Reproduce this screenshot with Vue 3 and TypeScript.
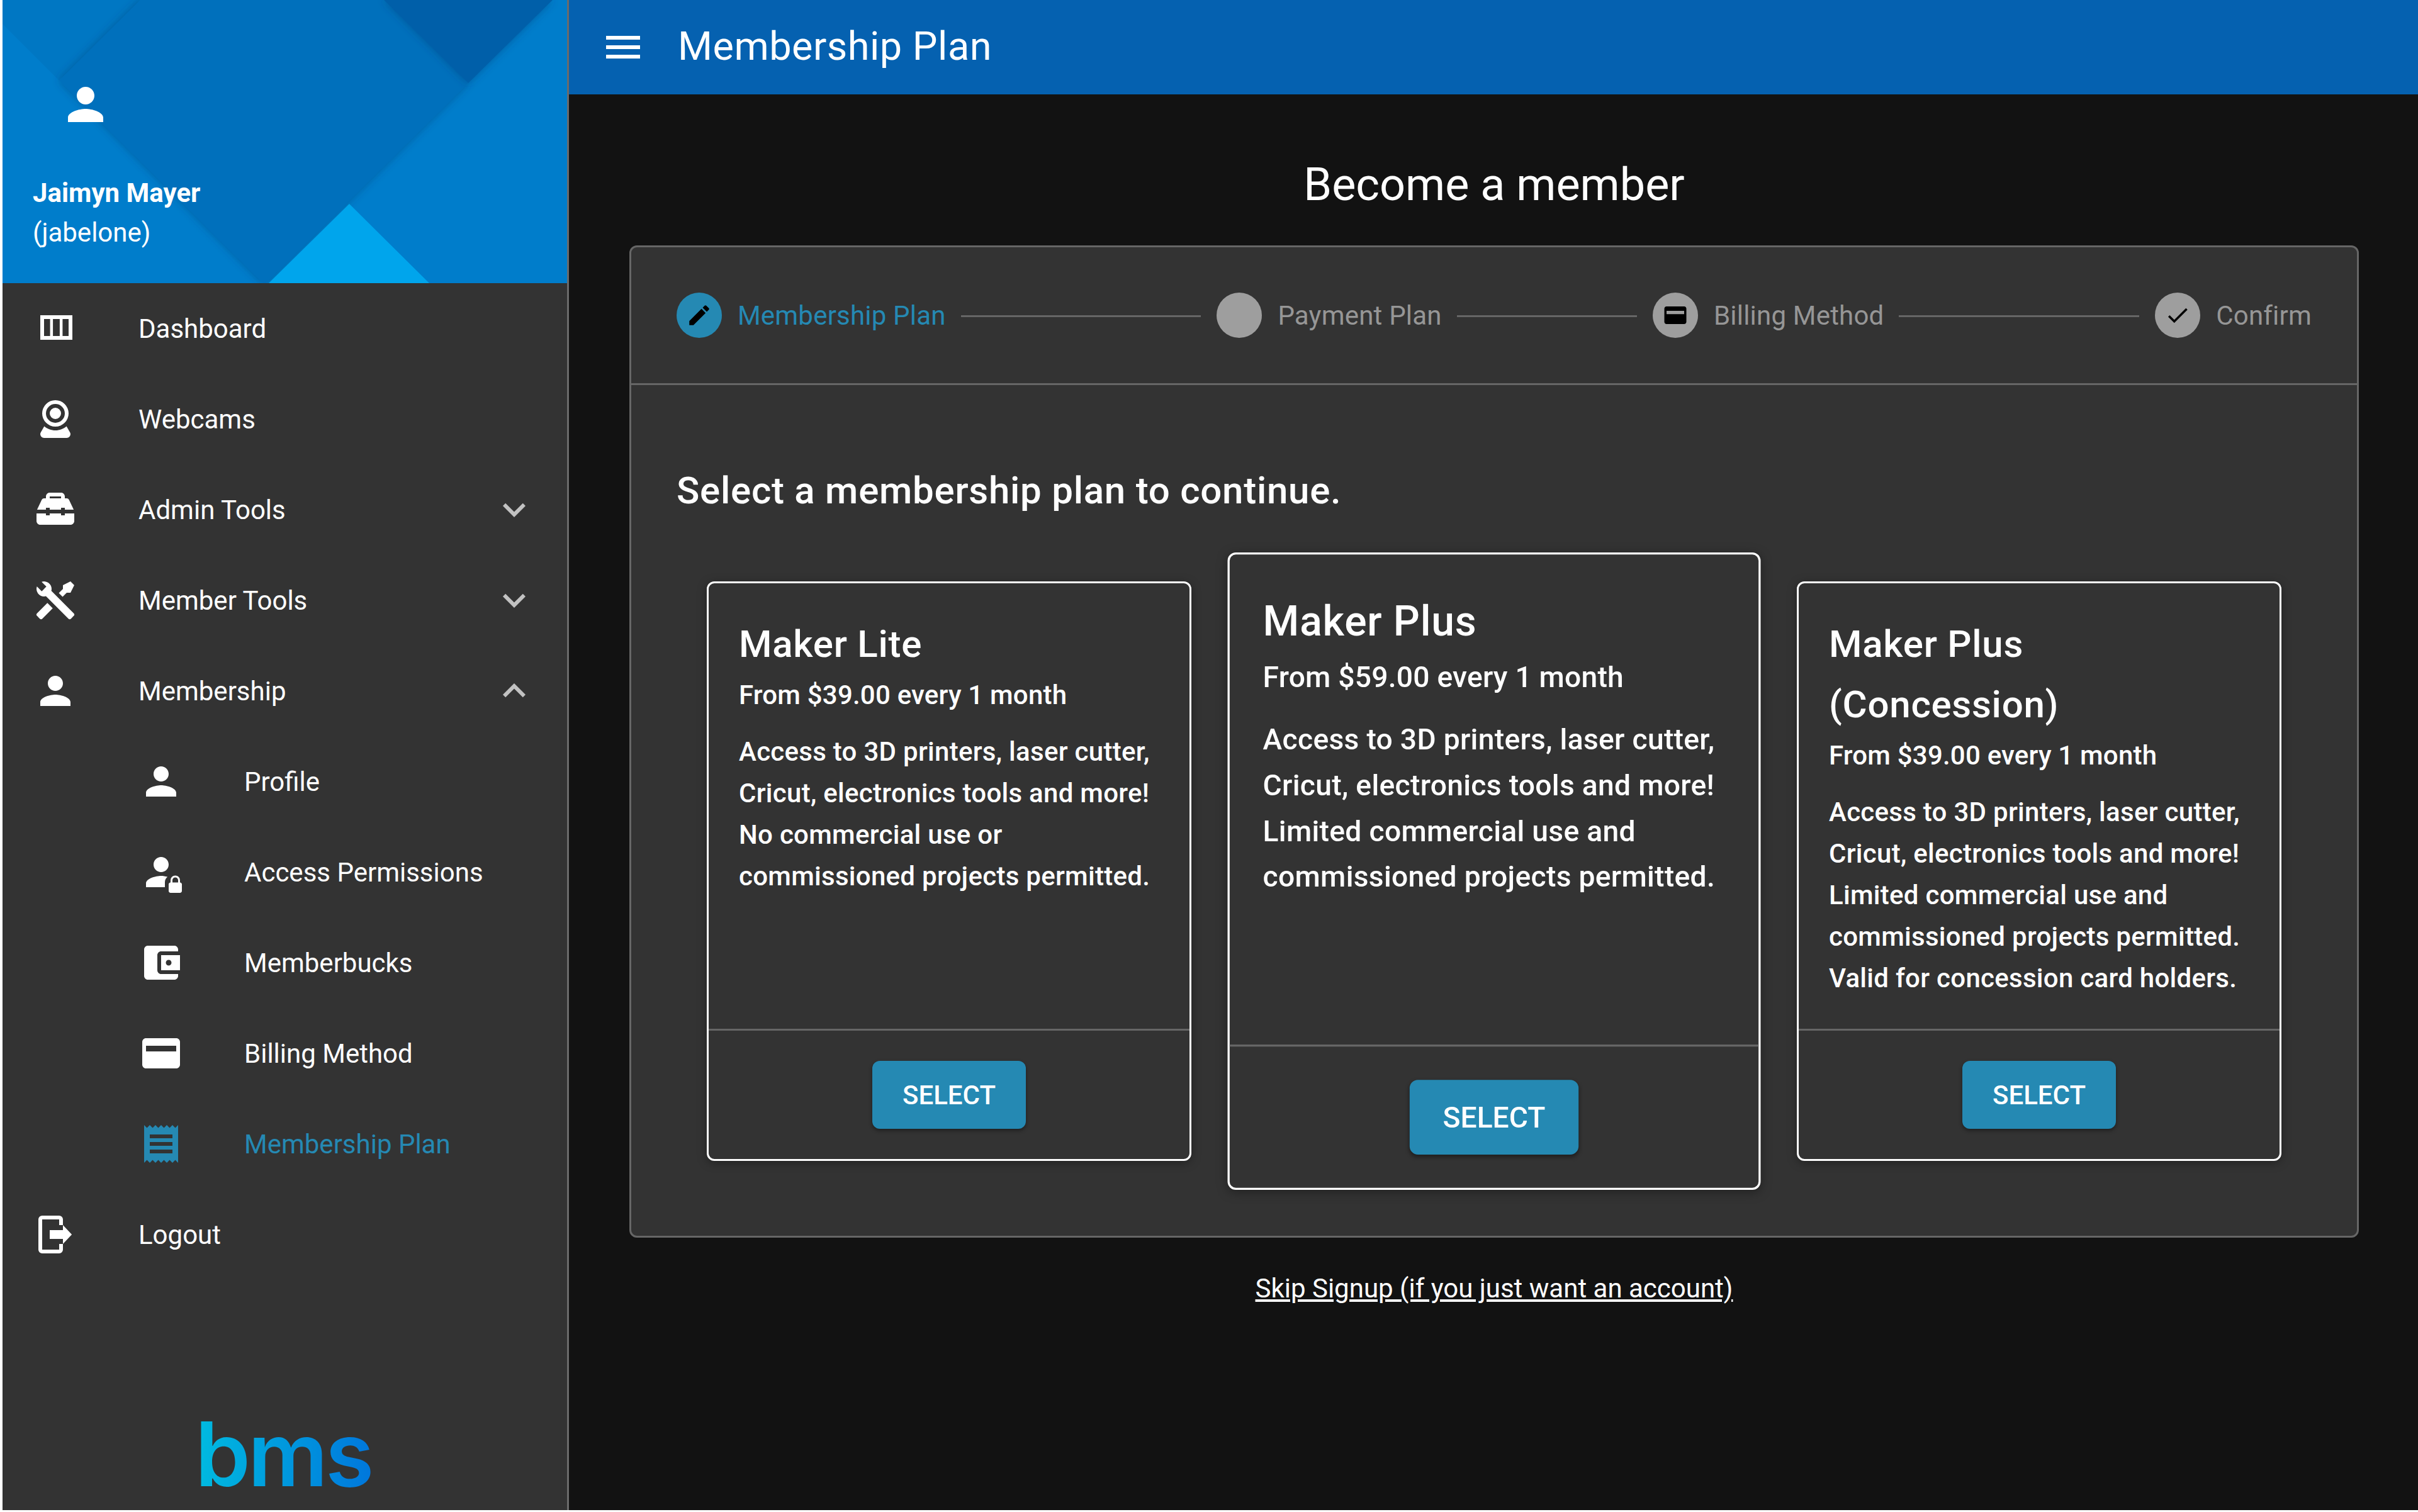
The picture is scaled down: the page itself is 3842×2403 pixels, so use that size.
<template>
  <div class="app-shell">
    <aside class="drawer">
      <div class="drawer-header">
        <svg class="header-art" viewBox="0 0 897 450" preserveAspectRatio="none">
          <defs>
            <filter id="soft" x="-10%" y="-10%" width="120%" height="120%">
              <feDropShadow dx="0" dy="0" stdDeviation="7" flood-color="#00386e" flood-opacity="0.45" />
            </filter>
          </defs>
          <rect width="897" height="450" fill="#007dcb" />
          <polygon points="0,38 90,128 219,0 0,0" fill="#0077c3" />
          <polygon points="219,0 90,128 416,452 740,132 606,0" fill="#0070bc" filter="url(#soft)" />
          <polygon points="606,0 874,0 740,132" fill="#005fa9" filter="url(#soft)" />
          <polygon points="551,324 423,450 678,450" fill="#00a5ec" />
        </svg>
        <svg class="header-avatar" viewBox="0 0 24 24"><path :d="icons.person" /></svg>
        <div class="user-name">Jaimyn Mayer</div>
        <div class="user-handle">(jabelone)</div>
      </div>

      <nav class="nav-list">
        <div
          v-for="item in navItems"
          :key="item.label"
          class="nav-item"
          :class="{ sub: item.sub, active: item.active }"
        >
          <svg class="nav-icon" viewBox="0 0 24 24"><path :d="item.icon" fill-rule="evenodd" /></svg>
          <span class="nav-label">{{ item.label }}</span>
          <svg v-if="item.chevron" class="nav-chevron" viewBox="0 0 24 24">
            <path :d="item.chevron === 'up' ? icons.chevronUp : icons.chevronDown" />
          </svg>
        </div>
      </nav>

      <div class="drawer-logo">
        <span class="logo-text">bms</span>
      </div>
    </aside>

    <div class="page">
      <header class="toolbar">
        <svg class="menu-icon" viewBox="0 0 24 24"><path d="M3 18h18v-2H3v2zm0-5h18v-2H3v2zm0-7v2h18V6H3z" /></svg>
        <div class="toolbar-title">Membership Plan</div>
      </header>

      <main class="content">
        <h1 class="page-title">Become a member</h1>

        <section class="stepper">
          <div class="stepper-head">
            <template v-for="(step, i) in steps" :key="step.label">
              <div class="step" :class="{ current: i === 0 }">
                <span class="step-dot">
                  <svg v-if="step.icon" viewBox="0 0 24 24"><path :d="step.icon" fill-rule="evenodd" /></svg>
                </span>
                <span class="step-label">{{ step.label }}</span>
              </div>
              <div v-if="step.grow" class="step-line" :class="`grow-${step.grow}`"></div>
            </template>
          </div>

          <div class="stepper-body">
            <h2 class="select-title">Select a membership plan to continue.</h2>
            <div class="plans">
              <article v-for="plan in plans" :key="plan.name + plan.price" class="plan" :class="{ featured: plan.featured }">
                <div class="plan-main">
                  <h3 class="plan-name">{{ plan.name }}</h3>
                  <div class="plan-price">{{ plan.price }}</div>
                  <p class="plan-desc">
                    <span v-for="line in plan.lines" :key="line">{{ line }}</span>
                  </p>
                </div>
                <div class="plan-actions">
                  <button class="select-btn" type="button">SELECT</button>
                </div>
              </article>
            </div>
          </div>
        </section>

        <a class="skip-link" href="#">Skip Signup (if you just want an account)</a>
      </main>
    </div>
  </div>
</template>

<script setup lang="ts">
interface NavItem {
  label: string
  icon: string
  sub?: boolean
  active?: boolean
  chevron?: 'up' | 'down'
}

interface Plan {
  name: string
  price: string
  lines: string[]
  featured?: boolean
}

const icons = {
  person: 'M12 12c2.21 0 4-1.79 4-4s-1.79-4-4-4-4 1.79-4 4 1.79 4 4 4zm0 2c-2.67 0-8 1.34-8 4v2h16v-2c0-2.66-5.33-4-8-4z',
  dashboard: 'M4 5h17v13H4zM6 7v9h3.2V7zM10.7 7v9h3.6V7zM15.8 7v9H19V7z',
  webcam: 'M12,2A7,7 0 0,1 19,9A7,7 0 0,1 12,16A7,7 0 0,1 5,9A7,7 0 0,1 12,2M12,4A5,5 0 0,0 7,9A5,5 0 0,0 12,14A5,5 0 0,0 17,9A5,5 0 0,0 12,4M12,6A3,3 0 0,1 15,9A3,3 0 0,1 12,12A3,3 0 0,1 9,9A3,3 0 0,1 12,6M6,22A2,2 0 0,1 4,20C4,19.62 4.1,19.27 4.29,18.97L6.11,15.81C7.69,17.17 9.75,18 12,18C14.25,18 16.31,17.17 17.89,15.81L19.71,18.97C19.9,19.27 20,19.62 20,20A2,2 0 0,1 18,22H6Z',
  toolbox: 'M9 3h6c1.1 0 2 .9 2 2v1h1c.6 0 1.1.4 1.3.9L21.7 12H17v-1h-2v1H9v-1H7v1H2.3l2.4-5.1C4.9 6.4 5.4 6 6 6h1V5c0-1.1.9-2 2-2zM9 5v1h6V5zM2 14h5v1h2v-1h6v1h2v-1h5v4c0 1.1-.9 2-2 2H4c-1.1 0-2-.9-2-2z',
  tools: 'M21.71 20.29L20.29 21.71A1 1 0 0 1 18.88 21.71L7 9.85A3.81 3.81 0 0 1 6 10A4 4 0 0 1 2.22 4.7L4.76 7.24L5.29 6.71L6.71 5.29L7.24 4.76L4.7 2.22A4 4 0 0 1 10 6A3.81 3.81 0 0 1 9.85 7L21.71 18.88A1 1 0 0 1 21.71 20.29M2.29 18.88A1 1 0 0 0 2.29 20.29L3.71 21.71A1 1 0 0 0 5.12 21.71L10.59 16.25L7.76 13.42M20 2L16 4V6L13.83 8.17L15.83 10.17L18 8H20L22 4Z',
  personLock: 'M12 12c2.21 0 4-1.79 4-4s-1.79-4-4-4-4 1.79-4 4 1.79 4 4 4zM4 20v-2c0-2.66 5.33-4 8-4 1 0 2.2.18 3.4.52-.9.68-1.4 1.7-1.4 2.9V20zM22 17.5v-1.2a2.5 2.5 0 0 0-5 0v1.2c-.55 0-1 .45-1 1V22c0 .55.45 1 1 1h5c.55 0 1-.45 1-1v-3.5c0-.55-.45-1-1-1zm-1 0h-3v-1.2a1.5 1.5 0 0 1 3 0z',
  wallet: 'M21 18v1c0 1.1-.9 2-2 2H5c-1.11 0-2-.9-2-2V5c0-1.1.89-2 2-2h14c1.1 0 2 .9 2 2v1h-9c-1.11 0-2 .9-2 2v8c0 1.1.89 2 2 2h9zm-9-2h10V8H12v8zm4-2.5c-.83 0-1.5-.67-1.5-1.5s.67-1.5 1.5-1.5 1.5.67 1.5 1.5-.67 1.5-1.5 1.5z',
  card: 'M20 4H4c-1.11 0-1.99.89-1.99 2L2 18c0 1.11.89 2 2 2h16c1.11 0 2-.89 2-2V6c0-1.11-.89-2-2-2zm0 7H4V8h16v3z',
  receipt: 'M18 17H6v-2h12v2zm0-4H6v-2h12v2zm0-4H6V7h12v2zM3 22l1.5-1.5L6 22l1.5-1.5L9 22l1.5-1.5L12 22l1.5-1.5L15 22l1.5-1.5L18 22l1.5-1.5L21 22V2l-1.5 1.5L18 2l-1.5 1.5L15 2l-1.5 1.5L12 2l-1.5 1.5L9 2 7.5 3.5 6 2 4.5 3.5 3 2v20z',
  logout: 'M5 2h9a2 2 0 0 1 2 2v3h-2V4H5v16h9v-3h2v3a2 2 0 0 1-2 2H5a2 2 0 0 1-2-2V4a2 2 0 0 1 2-2zM9 9.7h7V7l4.7 5-4.7 5v-2.7H9z',
  chevronDown: 'M16.59 8.59L12 13.17 7.41 8.59 6 10l6 6 6-6z',
  chevronUp: 'M12 8l-6 6 1.41 1.41L12 10.83l4.59 4.58L18 14z',
  edit: 'M3 17.25V21h3.75L17.81 9.94l-3.75-3.75L3 17.25zM20.71 7.04c.39-.39.39-1.02 0-1.41l-2.34-2.34c-.39-.39-1.02-.39-1.41 0l-1.83 1.83 3.75 3.75 1.83-1.83z',
  check: 'M9 16.17L4.83 12l-1.42 1.41L9 19 21 7l-1.41-1.41z'
}

const navItems: NavItem[] = [
  { label: 'Dashboard', icon: icons.dashboard },
  { label: 'Webcams', icon: icons.webcam },
  { label: 'Admin Tools', icon: icons.toolbox, chevron: 'down' },
  { label: 'Member Tools', icon: icons.tools, chevron: 'down' },
  { label: 'Membership', icon: icons.person, chevron: 'up' },
  { label: 'Profile', icon: icons.person, sub: true },
  { label: 'Access Permissions', icon: icons.personLock, sub: true },
  { label: 'Memberbucks', icon: icons.wallet, sub: true },
  { label: 'Billing Method', icon: icons.card, sub: true },
  { label: 'Membership Plan', icon: icons.receipt, sub: true, active: true },
  { label: 'Logout', icon: icons.logout }
]

const steps = [
  { label: 'Membership Plan', icon: icons.edit, grow: 4 },
  { label: 'Payment Plan', icon: '', grow: 3 },
  { label: 'Billing Method', icon: icons.card, grow: 4 },
  { label: 'Confirm', icon: icons.check, grow: 0 }
]

const plans: Plan[] = [
  {
    name: 'Maker Lite',
    price: 'From $39.00 every 1 month',
    lines: [
      'Access to 3D printers, laser cutter,',
      'Cricut, electronics tools and more!',
      'No commercial use or',
      'commissioned projects permitted.'
    ]
  },
  {
    name: 'Maker Plus',
    price: 'From $59.00 every 1 month',
    featured: true,
    lines: [
      'Access to 3D printers, laser cutter,',
      'Cricut, electronics tools and more!',
      'Limited commercial use and',
      'commissioned projects permitted.'
    ]
  },
  {
    name: 'Maker Plus\n(Concession)',
    price: 'From $39.00 every 1 month',
    lines: [
      'Access to 3D printers, laser cutter,',
      'Cricut, electronics tools and more!',
      'Limited commercial use and',
      'commissioned projects permitted.',
      'Valid for concession card holders.'
    ]
  }
]
</script>

<style>
html,
body {
  margin: 0;
  background: #fff;
}
</style>

<style scoped>
.app-shell {
  display: flex;
  width: 3842px;
  height: 2403px;
  box-sizing: border-box;
  padding: 0 0 3px 4px;
  background: #fff;
  font-family: Roboto, "Liberation Sans", sans-serif;
  font-size: 42px;
  color: #fff;
  overflow: hidden;
}

/* drawer */
.drawer {
  width: 900px;
  flex: none;
  box-sizing: border-box;
  display: flex;
  flex-direction: column;
  background: #333;
  border-right: 3px solid #6b6b6b;
}

.drawer-header {
  position: relative;
  height: 450px;
  flex: none;
  box-sizing: border-box;
  padding: 138px 0 0 48px;
  overflow: hidden;
}

.header-art {
  position: absolute;
  inset: 0;
  width: 100%;
  height: 100%;
}

.header-avatar {
  position: relative;
  display: block;
  width: 84px;
  height: 84px;
  margin: -14px 0 67px 42px;
  fill: #fff;
}

.user-name,
.user-handle {
  position: relative;
  line-height: 63px;
}

.user-name {
  font-weight: 700;
}

.nav-item {
  height: 144px;
  display: flex;
  align-items: center;
  padding: 0 48px;
}

.nav-item.sub {
  padding-left: 216px;
}

.nav-icon {
  width: 72px;
  height: 72px;
  flex: none;
  fill: #fff;
  margin-right: 96px;
}

.nav-label {
  flex: 1;
}

.nav-chevron {
  width: 72px;
  height: 72px;
  flex: none;
  fill: rgba(255, 255, 255, 0.7);
}

.nav-item.active {
  color: #2589b3;
}

.nav-item.active .nav-icon {
  fill: #2589b3;
}

.drawer-logo {
  margin-top: auto;
  padding: 0 0 4px 306px;
  line-height: 0;
}

.logo-text {
  display: inline-block;
  font-family: Inter, Roboto, sans-serif;
  font-weight: 600;
  font-size: 141px;
  line-height: 170px;
  letter-spacing: -4px;
  background: linear-gradient(90deg, #00bbe0, #0077dc);
  -webkit-background-clip: text;
  background-clip: text;
  color: transparent;
}

/* page */
.page {
  flex: 1;
  min-width: 0;
  display: flex;
  flex-direction: column;
  background: #121212;
}

.toolbar {
  height: 150px;
  flex: none;
  display: flex;
  align-items: center;
  padding-left: 50px;
  background: #0561b0;
}

.menu-icon {
  width: 72px;
  height: 72px;
  fill: #fff;
  margin-right: 51px;
}

.toolbar-title {
  padding-bottom: 4px;
  font-size: 63px;
  letter-spacing: 0.008em;
}

.content {
  flex: 1;
  padding: 96px 94px 0 96px;
  text-align: center;
}

.page-title {
  margin: 0 0 48px;
  font-size: 72px;
  font-weight: 400;
  line-height: 96px;
}

/* stepper */
.stepper {
  border: 3px solid #666;
  border-radius: 12px;
  background: #333;
  text-align: left;
}

.stepper-head {
  height: 216px;
  display: flex;
  align-items: center;
  padding: 0 72px;
  border-bottom: 3px solid #666;
}

.step {
  display: flex;
  align-items: center;
  color: #969696;
}

.step.current {
  color: #2589b3;
}

.step-label {
  letter-spacing: 0.2px;
}

.step-dot {
  width: 72px;
  height: 72px;
  margin-right: 25px;
  border-radius: 50%;
  display: flex;
  align-items: center;
  justify-content: center;
  background: #9e9e9e;
}

.step.current .step-dot {
  background: #2589b3;
}

.step-dot svg {
  width: 42px;
  height: 42px;
  fill: #000;
}

.step-line {
  height: 3px;
  margin: 3px 25px 0 24px;
  background: #666;
}

.grow-4 {
  flex: 4 1 0;
}

.grow-3 {
  flex: 3 1 0;
}

.stepper-body {
  padding: 132px 72px 119px;
}

.select-title {
  margin: 0 0 108px;
  font-size: 60px;
  font-weight: 500;
  line-height: 72px;
  letter-spacing: 0.0125em;
}

/* plan cards */
.plans {
  display: grid;
  grid-template-columns: repeat(3, 1fr);
  gap: 0 96px;
  padding: 0 48px;
}

.plan {
  display: flex;
  flex-direction: column;
  border: 3px solid #fff;
  border-radius: 12px;
  background: #333;
  box-shadow: 0 3px 15px rgba(0, 0, 0, 0.35);
}

.plan.featured {
  transform: scale(1.1);
}

.plan-main {
  flex: 1;
  padding: 49px 48px 47px;
}

.plan-name {
  margin: 0;
  font-size: 60px;
  font-weight: 500;
  line-height: 96px;
  letter-spacing: 0.0125em;
  white-space: pre-line;
}

.plan-price {
  margin-bottom: 24px;
  font-size: 42px;
  font-weight: 500;
  line-height: 66px;
  letter-spacing: 0.2px;
}

.plan-desc {
  margin: 0;
  font-size: 42px;
  font-weight: 500;
  line-height: 66px;
  letter-spacing: 0.28px;
}

.plan-desc span {
  display: block;
}

.plan-actions {
  display: flex;
  justify-content: center;
  padding: 48px;
  border-top: 3px solid #666;
}

.select-btn {
  width: 244px;
  height: 108px;
  border: 0;
  border-radius: 12px;
  background: #2589b3;
  color: #fff;
  font: 500 42px Roboto, "Liberation Sans", sans-serif;
  box-shadow: 0 3px 6px rgba(0, 0, 0, 0.4);
}

.skip-link {
  display: inline-block;
  margin-top: 48px;
  color: #fff;
  font-size: 42px;
  line-height: 66px;
}
</style>
